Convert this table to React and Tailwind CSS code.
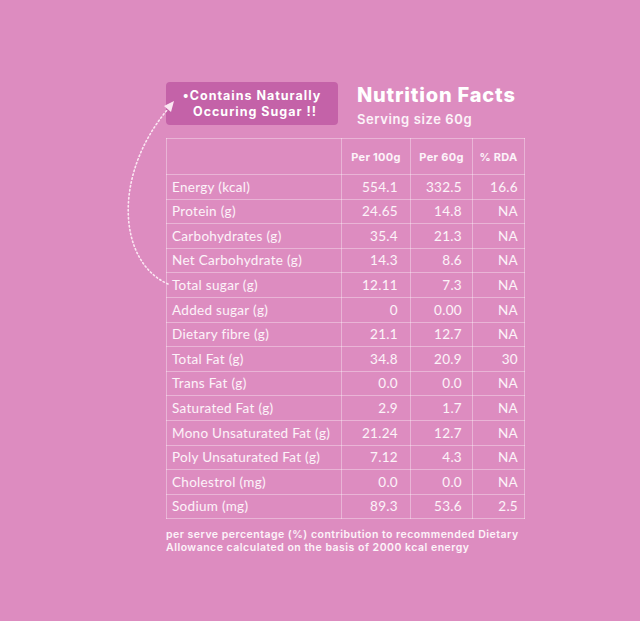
const rows = [
  ["Energy (kcal)", "554.1", "332.5", "16.6"],
  ["Protein (g)", "24.65", "14.8", "NA"],
  ["Carbohydrates (g)", "35.4", "21.3", "NA"],
  ["Net Carbohydrate (g)", "14.3", "8.6", "NA"],
  ["Total sugar (g)", "12.11", "7.3", "NA"],
  ["Added sugar (g)", "0", "0.00", "NA"],
  ["Dietary fibre (g)", "21.1", "12.7", "NA"],
  ["Total Fat (g)", "34.8", "20.9", "30"],
  ["Trans Fat (g)", "0.0", "0.0", "NA"],
  ["Saturated Fat (g)", "2.9", "1.7", "NA"],
  ["Mono Unsaturated Fat (g)", "21.24", "12.7", "NA"],
  ["Poly Unsaturated Fat (g)", "7.12", "4.3", "NA"],
  ["Cholestrol (mg)", "0.0", "0.0", "NA"],
  ["Sodium (mg)", "89.3", "53.6", "2.5"],
];

const App = () => {
  return (
    <div className="relative w-[640px] h-[621px] bg-[#dd8cc0] overflow-hidden">
      {/* dotted arrow from Total sugar to the badge */}
      <svg className="absolute top-0 left-0 w-[640px] h-[621px] pointer-events-none" viewBox="0 0 640 621">
        <path d="M168 284 C 118 262, 112 175, 168 109" fill="none" stroke="#fbe6f2" strokeWidth="1.6" strokeDasharray="1.4 2.6" strokeLinecap="round" />
        <polygon points="174,101 164,106 171,112" fill="#fbe6f2" />
      </svg>

      <div className="pl-[166px] pt-[82px]" style={{ fontFamily: "Inter, 'Open Sans', sans-serif" }}>
        <div className="flex">
          <div className="w-[172px] h-[43px] rounded-[4px] bg-[#c462a8] flex flex-col items-center justify-center text-white font-bold text-[12.5px] leading-[16px] tracking-[1px]">
            <span>•Contains Naturally</span>
            <span className="pl-[6px]">Occuring Sugar !!</span>
          </div>
          <div className="ml-[19px] mt-[1px] text-white">
            <div className="text-[20px] font-extrabold leading-[24px] tracking-[0.8px]">Nutrition Facts</div>
            <div className="mt-[4px] text-[13px] font-semibold text-white/90 leading-[16px] tracking-[0.6px]">Serving size 60g</div>
          </div>
        </div>

        <table className="mt-[11px] border-collapse text-white/90" style={{ fontFamily: "Lato, 'Open Sans', sans-serif" }}>
          <thead>
            <tr className="h-[36px] text-[11px] font-bold tracking-[0.3px]" style={{ fontFamily: "Inter, 'Open Sans', sans-serif" }}>
              <th className="w-[175px] border border-white/35"></th>
              <th className="w-[69px] border border-white/35 text-center pt-[2px]">Per 100g</th>
              <th className="w-[62px] border border-white/35 text-center pt-[2px]">Per 60g</th>
              <th className="w-[52px] border border-white/35 text-center pt-[2px]">% RDA</th>
            </tr>
          </thead>
          <tbody className="text-[13.5px] tracking-[0.3px]">
            {rows.map((r) => (
              <tr key={r[0]} className="h-[24.6px]">
                <td className="border border-white/35 pl-[5px] whitespace-nowrap">{r[0]}</td>
                <td className="border border-white/35 text-right pr-[12px]">{r[1]}</td>
                <td className="border border-white/35 text-right pr-[10px]">{r[2]}</td>
                <td className="border border-white/35 text-right pr-[6px]">{r[3]}</td>
              </tr>
            ))}
          </tbody>
        </table>

        <p className="mt-[9px] text-[10.5px] leading-[13px] font-semibold text-white/90 tracking-[0.5px] whitespace-nowrap">
          per serve percentage (%) contribution to recommended Dietary
          <br />
          Allowance calculated on the basis of 2000 kcal energy
        </p>
      </div>
    </div>
  );
};

export default App;
